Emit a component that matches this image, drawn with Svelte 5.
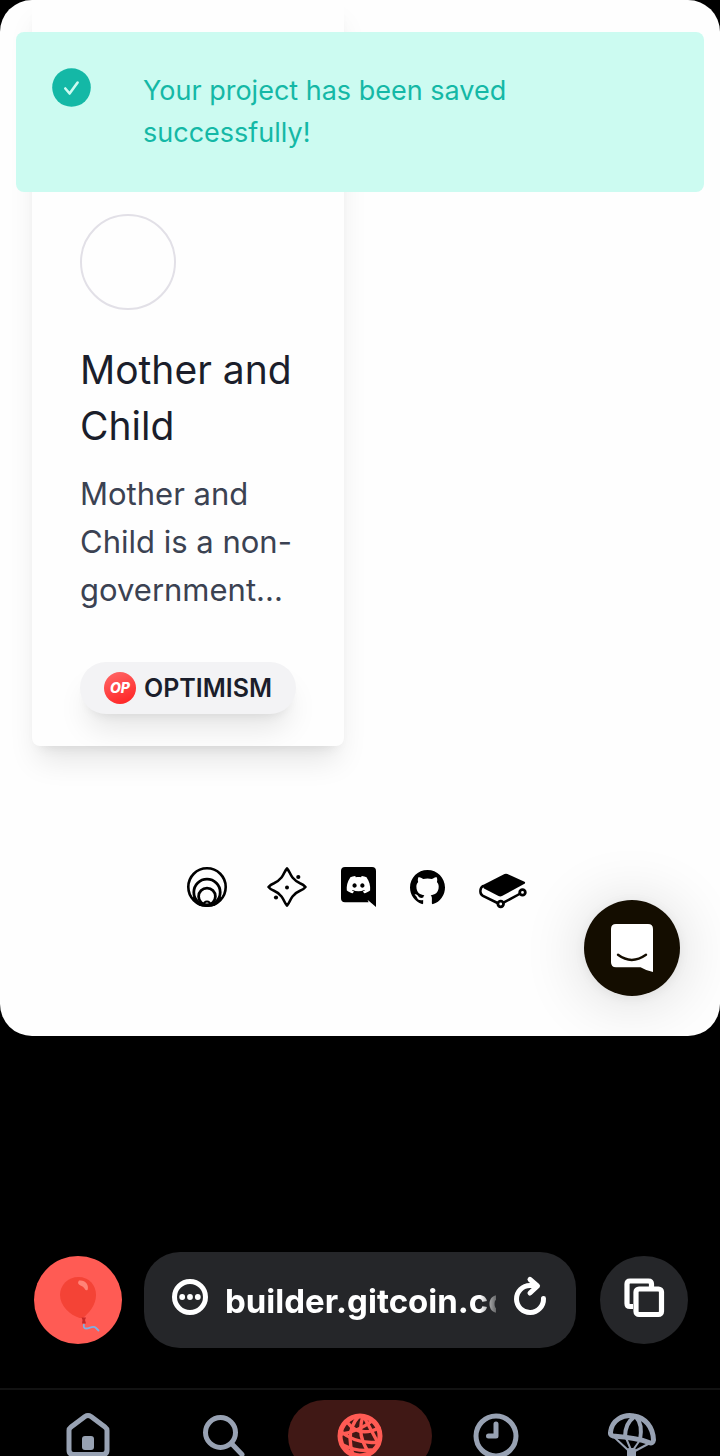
<script>
  const tabs = [
    { id: 'home', label: 'Home' },
    { id: 'search', label: 'Search' },
    { id: 'browser', label: 'Browser' },
    { id: 'history', label: 'Activity' },
    { id: 'drops', label: 'Airdrops' }
  ];
  let active = $state('browser');
</script>

<div class="shell">
  <div class="page">
    <div class="toast" role="status">
      <svg class="toast-icon" viewBox="0 0 39 39" aria-hidden="true">
        <circle cx="19.500" cy="19.500" r="19.300" fill="#14b8a6" />
        <path d="M13.300 20.500l4.300 5 8-11" fill="none" stroke="#ccfbf1" stroke-width="2.600" stroke-linecap="round" stroke-linejoin="round" />
      </svg>
      <p>Your project has been saved successfully!</p>
    </div>

    <main class="projects">
      <article class="card">
        <div class="avatar"></div>
        <h2>Mother and Child</h2>
        <p class="summary">Mother and Child is a non-government...</p>
        <div class="network">
          <svg viewBox="0 0 32 32" aria-hidden="true">
            <defs>
              <linearGradient id="op" x1="0.300" y1="0" x2="0.700" y2="1">
                <stop offset="0" stop-color="#ff6363" />
                <stop offset="1" stop-color="#ff2525" />
              </linearGradient>
            </defs>
            <circle cx="16" cy="16" r="16" fill="url(#op)" />
            <text x="16" y="21" text-anchor="middle" class="op">OP</text>
          </svg>
          <span>OPTIMISM</span>
        </div>
      </article>
    </main>

    <footer>
      <a class="first" href="#website" aria-label="Website">
        <svg width="40" height="40" viewBox="0 0 40 40" fill="none" stroke="#000">
          <circle cx="20" cy="20" r="18.700" stroke-width="2.600" />
          <circle cx="20" cy="25.300" r="13.200" stroke-width="2.800" />
          <circle cx="20" cy="29.500" r="8.400" stroke-width="2.800" />
          <path d="M16.500 38A3.500 3.500 0 0 1 23.500 38" stroke-width="2" />
          <path d="M6.500 30Q10 37 16 38.200M33.500 30Q30 37 24 38.200" stroke-width="2.800" />
        </svg>
      </a>
      <a href="#support" aria-label="Support">
        <svg width="40" height="40" viewBox="0 0 40 40">
          <path d="M20 1.500C22.500 4 23 7.500 25.500 10.500S30 15 33 16.200Q36.500 17.500 38.500 20Q36.500 22.500 33 23.800C30 25 28 26.500 25.500 29.500S22.500 36 20 38.500C17.500 36 17 32.500 14.500 29.500S10 25 7 23.800Q3.500 22.500 1.500 20Q3.500 17.500 7 16.200C10 15 12 13.500 14.500 10.500S17.500 4 20 1.500z" fill="none" stroke="#000" stroke-width="2.600" stroke-linejoin="round" />
          <circle cx="20" cy="20.500" r="2" />
          <circle cx="31.300" cy="10" r="2.100" />
          <circle cx="9" cy="30.500" r="2.100" />
        </svg>
      </a>
      <a href="#discord" aria-label="Discord">
        <svg width="35" height="40" viewBox="0 0 35 40">
          <path d="M4 0H31Q35 0 35 4V40L26.500 32.800L27.600 35.200H4Q0 35.200 0 31.200V4Q0 0 4 0z" />
          <path transform="translate(5.700 6.200) scale(.98 .95)" fill="#fff" d="M20.317 4.370a19.791 19.791 0 00-4.885-1.515.074.074 0 00-.079.037c-.211.375-.445.865-.608 1.250-1.845-.276-3.680-.276-5.487 0-.164-.393-.406-.874-.618-1.250a.077.077 0 00-.079-.037 19.736 19.736 0 00-4.885 1.515.070.070 0 00-.032.028C.533 9.046-.319 13.580.099 18.058a.082.082 0 00.031.056c2.053 1.508 4.041 2.423 5.993 3.029a.078.078 0 00.084-.028c.462-.630.873-1.295 1.226-1.994a.076.076 0 00-.042-.106c-.653-.248-1.274-.550-1.872-.892a.077.077 0 01-.008-.128c.126-.094.252-.192.372-.291a.074.074 0 01.078-.011c3.928 1.793 8.180 1.793 12.061 0a.074.074 0 01.079.010c.120.099.246.198.373.292a.077.077 0 01-.007.128 12.299 12.299 0 01-1.873.891.077.077 0 00-.041.107c.360.698.772 1.363 1.225 1.993a.076.076 0 00.084.029c1.961-.607 3.950-1.522 6.002-3.029a.077.077 0 00.031-.055c.500-5.177-.838-9.674-3.549-13.660a.061.061 0 00-.031-.029zM8.020 15.331c-1.183 0-2.157-1.086-2.157-2.419 0-1.333.956-2.419 2.157-2.419 1.211 0 2.176 1.095 2.157 2.419 0 1.333-.956 2.419-2.157 2.419zm7.975 0c-1.183 0-2.157-1.086-2.157-2.419 0-1.333.955-2.419 2.157-2.419 1.211 0 2.176 1.095 2.157 2.419 0 1.333-.946 2.419-2.157 2.419z" />
        </svg>
      </a>
      <a href="#github" aria-label="GitHub">
        <svg width="35" height="35" viewBox="0 0 16 16">
          <path d="M8 0C3.580 0 0 3.580 0 8c0 3.540 2.290 6.530 5.470 7.590.4.070.550-.170.550-.380 0-.190-.010-.820-.010-1.490-2.010.370-2.530-.490-2.690-.940-.090-.230-.480-.940-.820-1.130-.280-.150-.680-.520-.010-.530.630-.010 1.080.580 1.230.820.720 1.210 1.870.870 2.330.660.070-.520.280-.870.510-1.070-1.780-.2-3.640-.890-3.640-3.950 0-.870.310-1.590.820-2.150-.080-.2-.360-1.020.080-2.120 0 0 .670-.210 2.200.820.640-.180 1.320-.270 2-.270s1.360.090 2 .270c1.530-1.040 2.200-.820 2.200-.820.440 1.100.160 1.920.080 2.120.510.560.820 1.270.820 2.150 0 3.070-1.870 3.750-3.650 3.950.290.250.540.730.540 1.480 0 1.070-.010 1.930-.010 2.200 0 .210.150.460.550.380A8.010 8.010 0 0 0 16 8c0-4.420-3.580-8-8-8z" />
        </svg>
      </a>
      <a class="last" href="#docs" aria-label="Documentation">
        <svg width="48" height="36" viewBox="0 0 48 36">
          <path d="M3 13.500L25.500 2Q27 1.400 28.500 2L45.500 9.700Q46.800 10.700 45.500 11.700L23 24Q21.300 24.900 19.500 24L5 16.500z" />
          <path d="M4 14C.7 16 .3 22 4 24L18.500 31M24.500 30.700L40.500 22" fill="none" stroke="#000" stroke-width="2.500" stroke-linecap="round" />
          <circle cx="21.700" cy="32" r="2.800" fill="#fff" stroke="#000" stroke-width="2.800" />
          <circle cx="43.500" cy="20.400" r="2.800" fill="#fff" stroke="#000" stroke-width="2.800" />
        </svg>
      </a>
    </footer>

    <button class="chat" aria-label="Open chat">
      <svg width="42" height="48" viewBox="0 0 42 48">
        <path d="M5 0H37Q42 0 42 5V48Q35 46.500 29.500 43.200H5Q0 43.200 0 38.200V5Q0 0 5 0z" fill="#fff" />
        <path d="M7 30.800Q20.500 41 35 30.800" fill="none" stroke="#140d00" stroke-width="2.400" stroke-linecap="round" />
      </svg>
    </button>
  </div>

  <div class="toolbar">
    <button class="profile" aria-label="Wallet profile">
      <svg width="36" height="56" viewBox="0 0 36 56">
        <path d="M18.500 0C29 0 36 8 36 18C36 29 28 36.500 23 41H19.500C10 38 0 29 0 18C0 8 8 0 18.500 0z" fill="#f44336" />
        <path d="M19 3.500C25 2.500 29.500 8 27.500 13Q26 14.200 24.500 11.500Q23.500 9.300 20.500 8.500Q16.500 6.500 19 3.500z" fill="#ff8377" />
        <path d="M21.500 40.500L26 40.500L25 43L26 46.500H22L22.500 43z" fill="#c62828" />
        <path d="M24 47Q23 51.500 26 51.500C30 51.500 33 48 36 51L39 54" fill="none" stroke="#82aee3" stroke-width="1.800" />
      </svg>
    </button>
    <div class="address">
      <button class="bare" aria-label="Page options">
        <svg width="36" height="36" viewBox="0 0 36 36">
          <circle cx="18" cy="18" r="15.500" fill="none" stroke="#fff" stroke-width="5" />
          <g fill="#fff"><circle cx="10.200" cy="18" r="2.900" /><circle cx="18" cy="18" r="2.900" /><circle cx="25.800" cy="18" r="2.900" /></g>
        </svg>
      </button>
      <span class="url">builder.gitcoin.co</span>
      <button class="bare" aria-label="Reload">
        <svg width="32" height="38" viewBox="0 0 32 38" fill="none" stroke="#fff" stroke-width="5" stroke-linecap="round" stroke-linejoin="round">
          <path d="M29.500 20.500A13.500 13.500 0 1 1 16 7.500H22M16 1.500L23.500 8L16 15" />
        </svg>
      </button>
    </div>
    <button class="pages" aria-label="Open pages">
      <svg width="40" height="40" viewBox="0 0 40 40" fill="none" stroke="#fff" stroke-width="5.200" stroke-linejoin="round">
        <path d="M27.500 9V6Q27.500 3 24.500 3H6Q3 3 3 6V25.500Q3 28.500 6 28.500H9" />
        <rect x="12" y="11" width="25.500" height="25.500" rx="3" />
      </svg>
    </button>
  </div>

  <nav aria-label="Wallet">
    {#each tabs as tab (tab.id)}
      <button class:active={active === tab.id} aria-label={tab.label} onclick={() => (active = tab.id)}>
        <svg width="50" height="50" viewBox="0 0 50 50" fill="none" stroke="currentColor" stroke-width="5" stroke-linecap="round" stroke-linejoin="round">
          {#if tab.id === 'home'}
            <path d="M6 19.500Q6 17.500 8 16L22 5.500Q25 3.500 28 5.500L42 16Q44 17.500 44 19.500V39Q44 43.500 39.500 43.500H10.500Q6 43.500 6 39z" />
            <rect x="19" y="25" width="12" height="14" rx="3" fill="currentColor" stroke="none" />
          {:else if tab.id === 'search'}
            <circle cx="21.500" cy="21.500" r="15" />
            <path d="M32.500 32.500L43 43.500" />
          {:else if tab.id === 'browser'}
            <circle cx="25" cy="25" r="20" />
            <g stroke-width="3.400">
              <path d="M24 5Q10 20 18 44M28 5Q21 25 35 43M29 6Q34 15 42 30" />
              <path d="M12 11Q24 27 44 17M5 20Q22 34 44 31M8 34Q22 41 36 39M7 23Q24 20 37 10" />
            </g>
          {:else if tab.id === 'history'}
            <circle cx="25" cy="25" r="20" />
            <path d="M25 13V25H17.500" />
          {:else}
            <path d="M3.500 21C5 9 16 3 27 5C38 6.500 46 16 46.500 29Q46 33 42 31.500C31 27 19 26 6 25Q3 24 3.500 21z" />
            <path d="M27 6C20 11 18 18 18 26M29 6Q36 13 33 29" stroke-width="4" />
            <path d="M7 26L22 40M19 27L24 39M33 29L26 39M43 32L28 40" stroke-width="2" />
            <rect x="20" y="37" width="9" height="12" rx="2" fill="currentColor" stroke="none" />
          {/if}
        </svg>
      </button>
    {/each}
  </nav>
</div>

<style>
  :global(body) {
    margin: 0;
    background: #000;
  }
  .shell {
    box-sizing: border-box;
    display: flex;
    flex-direction: column;
    height: 100vh;
    overflow: hidden;
    background: #000;
    font-family: Inter, "Liberation Sans", sans-serif;
  }
  button {
    display: flex;
    align-items: center;
    justify-content: center;
    padding: 0;
    border: 0;
    background: none;
    cursor: pointer;
  }
  svg {
    display: block;
    flex: none;
    overflow: visible;
  }
  h2,
  p {
    margin: 0;
  }
  .page {
    position: relative;
    flex: 1;
    min-height: 0;
    overflow: hidden;
    border-radius: 32px;
    background: #fefefe;
  }
  .toast {
    position: absolute;
    z-index: 1;
    top: 32px;
    left: 16px;
    right: 16px;
    display: flex;
    gap: 52px;
    box-sizing: border-box;
    padding: 38px 36px;
    border-radius: 8px;
    background: #ccfbf1;
    color: #14b8a6;
    font-size: 27px;
    font-weight: 400;
    line-height: 42px;
  }
  .toast-icon {
    width: 39px;
    height: 39px;
    margin-top: -2px;
  }
  .projects {
    display: grid;
    grid-template-columns: 1fr 1fr;
    gap: 32px;
    padding: 0 32px;
  }
  .card {
    padding: 214px 48px 32px;
    border-radius: 8px;
    background: #fefefe;
    box-shadow: 0 20px 30px -6px rgb(0 0 0 / 0.1), 0 8px 12px -8px rgb(0 0 0 / 0.1);
  }
  .avatar {
    box-sizing: border-box;
    width: 96px;
    height: 96px;
    border: 2px solid #e2e0e7;
    border-radius: 50%;
  }
  h2 {
    margin-top: 32px;
    color: #1b1e2b;
    font-size: 39px;
    font-weight: 400;
    line-height: 56px;
  }
  .summary {
    margin-top: 16px;
    color: #3b4252;
    font-size: 31px;
    font-weight: 400;
    line-height: 48px;
  }
  .network {
    display: inline-flex;
    align-items: center;
    gap: 8px;
    height: 52px;
    margin-top: 48px;
    padding: 0 24px;
    border-radius: 26px;
    background: #f3f3f5;
    box-shadow: 0 20px 30px -6px rgb(0 0 0 / 0.1), 0 8px 12px -8px rgb(0 0 0 / 0.1);
    color: #1b1e2b;
    font-size: 25px;
    font-weight: 600;
    line-height: 32px;
    vertical-align: top;
  }
  .network svg {
    width: 32px;
    height: 32px;
  }
  .op {
    fill: #fff;
    font-size: 14px;
    font-style: italic;
    font-weight: 800;
  }
  footer {
    display: flex;
    align-items: center;
    justify-content: center;
    gap: 34px;
    padding: 120px 32px;
  }
  .first {
    width: 46px;
  }
  .last {
    width: 54px;
  }
  .last svg {
    margin-top: 6px;
  }
  .chat {
    position: absolute;
    right: 40px;
    bottom: 40px;
    width: 96px;
    height: 96px;
    border-radius: 50%;
    background: #140d00;
    box-shadow: 0 2px 12px rgb(0 0 0 / 0.06), 0 4px 64px rgb(0 0 0 / 0.16);
  }
  .toolbar {
    display: flex;
    align-items: center;
    gap: 24px;
    margin-top: 216px;
    padding: 0 32px 40px 34px;
  }
  .profile,
  .pages {
    flex: none;
    width: 88px;
    height: 88px;
    border-radius: 50%;
    background: #252629;
  }
  .profile {
    margin-right: -2px;
    background: #ff5b54;
  }
  .profile svg {
    margin-top: 10px;
  }
  .address {
    display: flex;
    align-items: center;
    flex: 1;
    min-width: 0;
    height: 96px;
    box-sizing: border-box;
    padding: 0 30px 0 28px;
    border-radius: 36px;
    background: #252629;
  }
  .address svg {
    margin-bottom: 6px;
  }
  .url {
    flex: 1;
    min-width: 0;
    margin: 2px 18px 0 17px;
    overflow: hidden;
    color: #fff;
    font-size: 33px;
    font-weight: 700;
    line-height: 44px;
    white-space: nowrap;
    mask-image: linear-gradient(to right, #000 calc(100% - 16px), rgb(0 0 0 / 0.3));
  }
  .pages svg {
    margin-bottom: 4px;
  }
  nav {
    display: grid;
    grid-template-columns: repeat(5, 1fr);
    flex: none;
    box-sizing: border-box;
    height: 68px;
    padding: 10px 20px 0;
    border-top: 2px solid #121212;
  }
  nav button {
    height: 72px;
    margin: 0 -4px;
    border-radius: 36px;
    color: #98a2b3;
  }
  nav .active {
    background: #401815;
    color: #ff5b54;
  }
</style>
